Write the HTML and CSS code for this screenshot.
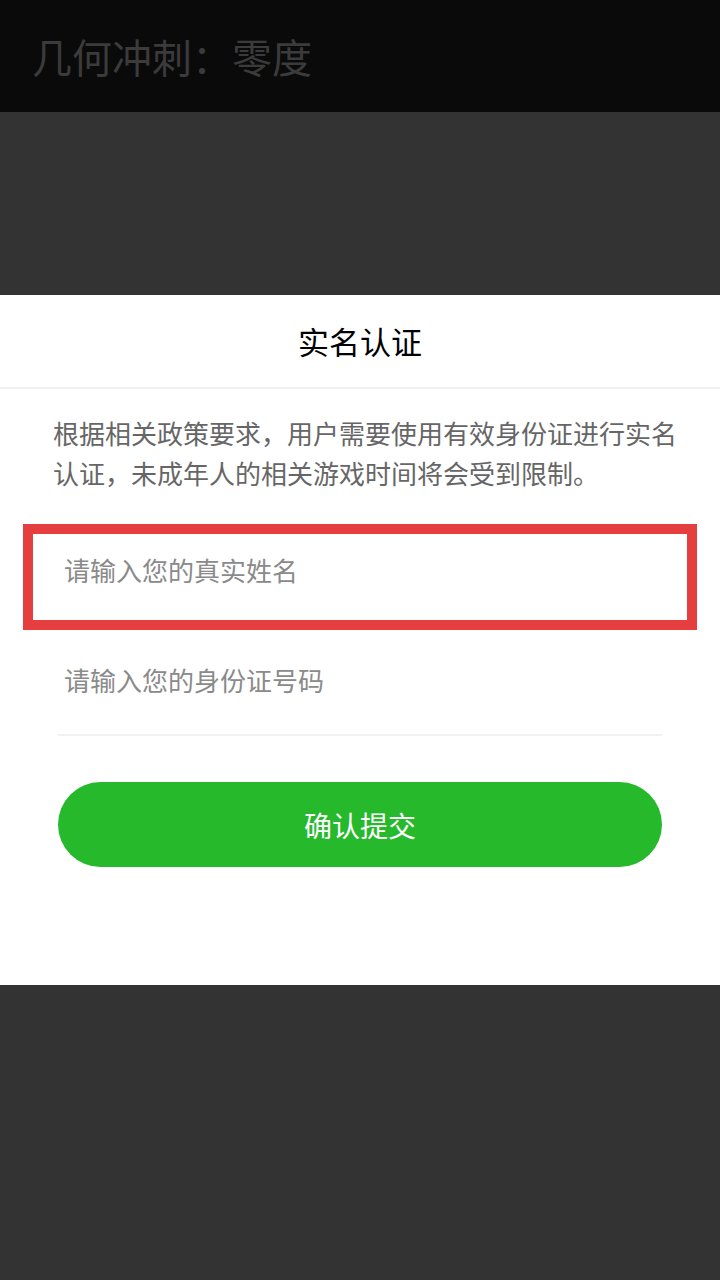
FILE: index.html
```html
<!DOCTYPE html>
<html lang="zh-CN">
<head>
<meta charset="utf-8">
<title>实名认证</title>
<link rel="stylesheet" href="styles.css">
</head>
<body>
<header class="topbar"><h1 class="app-title">几何冲刺：零度</h1></header>
<div class="backdrop"></div>
<section class="modal">
  <div class="modal-header">实名认证</div>
  <p class="intro">根据相关政策要求，用户需要使用有效身份证进行实名认证，未成年人的相关游戏时间将会受到限制。</p>
  <form class="form">
    <div class="field">
      <input class="field-input" type="text" placeholder="请输入您的真实姓名">
      <div class="highlight"></div>
    </div>
    <div class="field">
      <input class="field-input" type="text" placeholder="请输入您的身份证号码">
    </div>
    <button class="submit" type="button">确认提交</button>
  </form>
</section>
</body>
</html>
```
FILE: styles.css
```css
* { box-sizing: border-box; }
html, body { margin: 0; padding: 0; }
body {
  width: 720px;
  height: 1280px;
  background: #333333;
  font-family: "Noto Sans CJK SC", "Noto Sans", sans-serif;
  overflow: hidden;
}
.topbar {
  height: 112px;
  background: #0a0a0a;
  display: flex;
  align-items: center;
  padding-left: 32px;
}
.app-title {
  margin: 0;
  font-size: 40px;
  font-weight: 400;
  color: #3b3b3b;
  line-height: 1;
}
.backdrop { height: 183px; }
.modal {
  background: #ffffff;
  height: 690px;
}
.modal-header {
  height: 94px;
  border-bottom: 2px solid #efefef;
  display: flex;
  align-items: center;
  justify-content: center;
  font-size: 31px;
  color: #000;
  padding-bottom: 2px;
}
.intro {
  margin: 24px 40px 0 53px;
  font-size: 26px;
  line-height: 40px;
  color: #666666;
}
.form {
  margin: 23px 0 0;
  padding: 0 58px;
}
.field {
  position: relative;
  height: 110px;
  border-bottom: 2px solid #f1f1f1;
  display: flex;
  align-items: center;
}
.field-input {
  border: 0;
  outline: 0;
  background: transparent;
  width: 100%;
  padding: 0 0 0 6px;
  font-family: inherit;
  font-size: 26px;
  color: #333;
  margin-top: -2px;
}
.field-input::placeholder { color: #8a8a8a; }
.highlight {
  position: absolute;
  top: 8px;
  left: -35px;
  right: -35px;
  bottom: -6px;
  border: 10px solid #e53e3e;
  pointer-events: none;
}
.submit {
  display: block;
  width: 100%;
  margin-top: 46px;
  height: 85px;
  border: 0;
  border-radius: 43px;
  background: #25b92b;
  color: #ffffff;
  font-family: inherit;
  font-size: 28px;
  padding: 0;
}
```
